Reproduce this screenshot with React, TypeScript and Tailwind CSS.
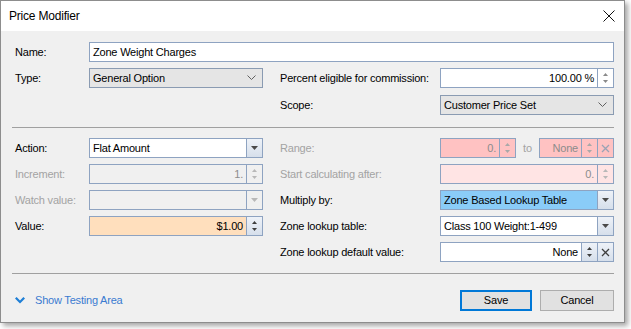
import React from "react";

const edge = "border border-[#8ea3c1]";

function Arrows({ color = "#7a7a7a" }: { color?: string }) {
  return (
    <svg width="5" height="12" viewBox="0 0 5 12">
      <polygon points="2.5,1 5,4 0,4" fill={color} />
      <polygon points="0,8 5,8 2.5,11" fill={color} />
    </svg>
  );
}

function Spin({ color, shaded }: { color?: string; shaded?: boolean }) {
  return (
    <div
      className={`w-[16px] h-full flex items-center justify-center border-l border-[#8ea3c1] ${
        shaded ? "bg-gradient-to-b from-[#eef2f8] to-[#d6dfeb]" : ""
      }`}
    >
      <Arrows color={color} />
    </div>
  );
}

function Drop({ color = "#4a4a4a" }: { color?: string }) {
  return (
    <div className="w-[16px] h-full flex items-center justify-center border-l border-[#8ea3c1] bg-gradient-to-b from-[#eef2f8] to-[#d6dfeb]">
      <svg width="7" height="4" viewBox="0 0 7 4">
        <polygon points="0,0 7,0 3.5,4" fill={color} />
      </svg>
    </div>
  );
}

function Clear({ color = "#4a4a4a", shaded }: { color?: string; shaded?: boolean }) {
  return (
    <div
      className={`w-[16px] h-full flex items-center justify-center border-l border-[#8ea3c1] ${
        shaded ? "bg-gradient-to-b from-[#eef2f8] to-[#d6dfeb]" : ""
      }`}
    >
      <svg width="9" height="9" viewBox="0 0 9 9">
        <path d="M1 1 L8 8 M8 1 L1 8" stroke={color} strokeWidth="1.3" />
      </svg>
    </div>
  );
}

function Chevron() {
  return (
    <svg width="9" height="6" viewBox="0 0 9 6">
      <path d="M0.5 0.5 L4.5 4.5 L8.5 0.5" stroke="#606060" strokeWidth="1" fill="none" />
    </svg>
  );
}

function Label({ children, off, w = "w-[77px]" }: { children: React.ReactNode; off?: boolean; w?: string }) {
  return (
    <div className={`${w} shrink-0 pl-[3px] ${off ? "text-[#a3a3a3]" : "text-black"}`}>{children}</div>
  );
}

function RLabel({ children, off }: { children: React.ReactNode; off?: boolean }) {
  return <div className={`w-[160px] shrink-0 ${off ? "text-[#a3a3a3]" : "text-black"}`}>{children}</div>;
}

export default function App() {
  return (
    <div className="w-[631px] h-[329px] bg-white font-['Liberation_Sans',Arial,sans-serif] text-[11px] tracking-[-0.2px]">
      <div className="w-[625px] h-[323px] border border-[#8d8d8d] bg-[#f0f0f0] flex flex-col shadow-[3px_3px_5px_rgba(0,0,0,0.35)]">
        {/* title */}
        <div className="h-[30px] bg-white flex items-center justify-between pl-[8px] pr-[9px]">
          <span className="text-[12px] text-black">Price Modifier</span>
          <svg width="12" height="12" viewBox="0 0 12 12">
            <path d="M0.5 0.5 L11.5 11.5 M11.5 0.5 L0.5 11.5" stroke="#111" strokeWidth="1" />
          </svg>
        </div>

        <div className="flex flex-col pl-[11px] pr-[10px] pt-[11px]">
          <div className="flex items-center h-[20px]">
            <Label>Name:</Label>
            <div className={`${edge} bg-white h-full flex-1 flex items-center pl-[3px]`}>Zone Weight Charges</div>
          </div>

          <div className="flex items-center h-[20px] mt-[6px]">
            <Label>Type:</Label>
            <div className="w-[174px] h-full border border-[#8a9bb2] bg-[#e5e5e5] flex items-center justify-between pl-[3px] pr-[6px]">
              <span>General Option</span>
              <Chevron />
            </div>
            <div className="w-[17px]" />
            <RLabel>Percent eligible for commission:</RLabel>
            <div className={`${edge} bg-white h-full flex-1 flex items-center`}>
              <span className="flex-1 text-right pr-[3px]">100.00 %</span>
              <Spin color="#8a8a8a" />
            </div>
          </div>

          <div className="flex items-center h-[20px] mt-[7px]">
            <div className="w-[268px]" />
            <RLabel>Scope:</RLabel>
            <div className="h-full flex-1 border border-[#8a9bb2] bg-[#e5e5e5] flex items-center justify-between pl-[3px] pr-[6px]">
              <span>Customer Price Set</span>
              <Chevron />
            </div>
          </div>

          <div className="h-px bg-[#a0a0a0] mt-[12px]" />

          <div className="flex items-center h-[20px] mt-[10px]">
            <Label>Action:</Label>
            <div className={`${edge} w-[174px] h-full bg-white flex items-center`}>
              <span className="flex-1 pl-[3px]">Flat Amount</span>
              <Drop />
            </div>
            <div className="w-[17px]" />
            <RLabel off>Range:</RLabel>
            <div className={`${edge} w-[76px] h-full bg-[#ffc2c2] flex items-center text-[#8c8c8c]`}>
              <span className="flex-1 text-right pr-[3px]">0.</span>
              <Spin color="#a8a8a8" />
            </div>
            <span className="w-[23px] text-center text-[#a3a3a3]">to</span>
            <div className={`${edge} flex-1 h-full bg-[#ffc2c2] flex items-center text-[#8c8c8c]`}>
              <span className="flex-1 text-right pr-[3px]">None</span>
              <Spin color="#a8a8a8" />
              <Clear color="#9aa3b5" />
            </div>
          </div>

          <div className="flex items-center h-[20px] mt-[6px]">
            <Label off>Increment:</Label>
            <div className={`${edge} w-[174px] h-full bg-[#f0f0f0] flex items-center text-[#8c8c8c]`}>
              <span className="flex-1 text-right pr-[3px]">1.</span>
              <Spin color="#b8b8b8" />
            </div>
            <div className="w-[17px]" />
            <RLabel off>Start calculating after:</RLabel>
            <div className={`${edge} flex-1 h-full bg-[#ffe4e4] flex items-center text-[#8c8c8c]`}>
              <span className="flex-1 text-right pr-[3px]">0.</span>
              <Spin color="#b8b8b8" />
            </div>
          </div>

          <div className="flex items-center h-[20px] mt-[6px]">
            <Label off>Watch value:</Label>
            <div className={`${edge} w-[174px] h-full bg-[#f0f0f0] flex items-center justify-end`}>
              <div className="w-[16px] h-full flex items-center justify-center border-l border-[#8ea3c1]">
                <svg width="7" height="4" viewBox="0 0 7 4">
                  <polygon points="0,0 7,0 3.5,4" fill="#b8b8b8" />
                </svg>
              </div>
            </div>
            <div className="w-[17px]" />
            <RLabel>Multiply by:</RLabel>
            <div className={`${edge} flex-1 h-full bg-[#8accf8] flex items-center`}>
              <span className="flex-1 pl-[3px]">Zone Based Lookup Table</span>
              <Drop />
            </div>
          </div>

          <div className="flex items-center h-[20px] mt-[6px]">
            <Label>Value:</Label>
            <div className={`${edge} w-[174px] h-full bg-[#ffdfbd] flex items-center`}>
              <span className="flex-1 text-right pr-[3px]">$1.00</span>
              <Spin color="#3e3e3e" shaded />
            </div>
            <div className="w-[17px]" />
            <RLabel>Zone lookup table:</RLabel>
            <div className={`${edge} flex-1 h-full bg-white flex items-center`}>
              <span className="flex-1 pl-[3px]">Class 100 Weight:1-499</span>
              <Drop />
            </div>
          </div>

          <div className="flex items-center h-[20px] mt-[6px]">
            <div className="w-[268px]" />
            <RLabel>Zone lookup default value:</RLabel>
            <div className={`${edge} flex-1 h-full bg-white flex items-center`}>
              <span className="flex-1 text-right pr-[3px]">None</span>
              <Spin color="#3e3e3e" shaded />
              <Clear color="#3e3e3e" shaded />
            </div>
          </div>

          <div className="h-px bg-[#a0a0a0] mt-[11px]" />

          <div className="flex items-center justify-between h-[21px] mt-[16px]">
            <div className="flex items-center gap-[10px] pl-[3px]">
              <svg width="10" height="7" viewBox="0 0 10 7">
                <path d="M0 1.6 L1.6 0 L5 3.4 L8.4 0 L10 1.6 L5 6.6 Z" fill="#1f7fd6" />
              </svg>
              <span className="text-[#3a7bd0]">Show Testing Area</span>
            </div>
            <div className="flex items-center gap-[8px] h-full">
              <button className="w-[72px] h-full border-2 border-[#0078d7] bg-[#e1e1e1] text-black">Save</button>
              <button className="w-[74px] h-full border border-[#adadad] bg-[#e1e1e1] text-black">Cancel</button>
            </div>
          </div>
        </div>
      </div>
    </div>
  );
}
